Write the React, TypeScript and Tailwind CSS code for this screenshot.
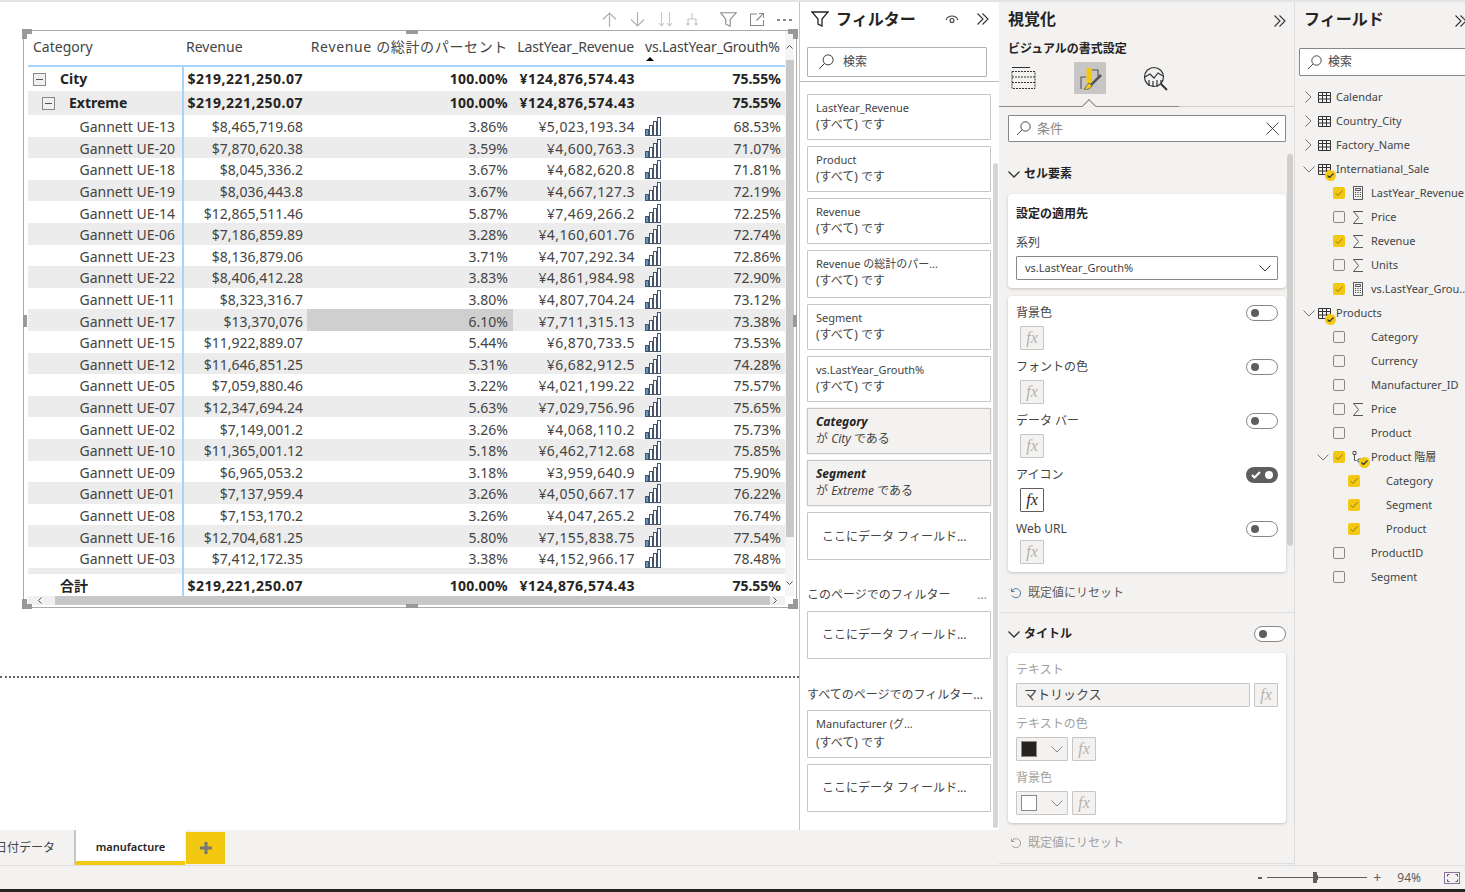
const rows = [
  ["13", "$8,465,719.68", "3.86%", "¥5,023,193.34", "68.53%"],
  ["20", "$7,870,620.38", "3.59%", "¥4,600,763.3", "71.07%"],
  ["18", "$8,045,336.2", "3.67%", "¥4,682,620.8", "71.81%"],
  ["19", "$8,036,443.8", "3.67%", "¥4,667,127.3", "72.19%"],
  ["14", "$12,865,511.46", "5.87%", "¥7,469,266.2", "72.25%"],
  ["06", "$7,186,859.89", "3.28%", "¥4,160,601.76", "72.74%"],
  ["23", "$8,136,879.06", "3.71%", "¥4,707,292.34", "72.86%"],
  ["22", "$8,406,412.28", "3.83%", "¥4,861,984.98", "72.90%"],
  ["11", "$8,323,316.7", "3.80%", "¥4,807,704.24", "73.12%"],
  ["17", "$13,370,076", "6.10%", "¥7,711,315.13", "73.38%"],
  ["15", "$11,922,889.07", "5.44%", "¥6,870,733.5", "73.53%"],
  ["12", "$11,646,851.25", "5.31%", "¥6,682,912.5", "74.28%"],
  ["05", "$7,059,880.46", "3.22%", "¥4,021,199.22", "75.57%"],
  ["07", "$12,347,694.24", "5.63%", "¥7,029,756.96", "75.65%"],
  ["02", "$7,149,001.2", "3.26%", "¥4,068,110.2", "75.73%"],
  ["10", "$11,365,001.12", "5.18%", "¥6,462,712.68", "75.85%"],
  ["09", "$6,965,053.2", "3.18%", "¥3,959,640.9", "75.90%"],
  ["01", "$7,137,959.4", "3.26%", "¥4,050,667.17", "76.22%"],
  ["08", "$7,153,170.2", "3.26%", "¥4,047,265.2", "76.74%"],
  ["16", "$12,704,681.25", "5.80%", "¥7,155,838.75", "77.54%"],
  ["03", "$7,412,172.35", "3.38%", "¥4,152,966.17", "78.48%"],
];

const filterCards = [
  { name: "LastYear_Revenue", h: "h-[46px]" },
  { name: "Product", h: "h-[46px]" },
  { name: "Revenue", h: "h-[46px]" },
  { name: "Revenue の総計のパー…", h: "h-[48px]" },
  { name: "Segment", h: "h-[46px]" },
  { name: "vs.LastYear_Grouth%", h: "h-[46px]" },
];

type Tree = { kind: "table" | "field" | "deep" | "hier"; label: string; open?: boolean; badge?: boolean; on?: boolean; icon?: "sum" | "calc" };

const tree: Tree[] = [
  { kind: "table", label: "Calendar" },
  { kind: "table", label: "Country_City" },
  { kind: "table", label: "Factory_Name" },
  { kind: "table", label: "Internatianal_Sale", open: true, badge: true },
  { kind: "field", label: "LastYear_Revenue", on: true, icon: "calc" },
  { kind: "field", label: "Price", icon: "sum" },
  { kind: "field", label: "Revenue", on: true, icon: "sum" },
  { kind: "field", label: "Units", icon: "sum" },
  { kind: "field", label: "vs.LastYear_Grou...", on: true, icon: "calc" },
  { kind: "table", label: "Products", open: true, badge: true },
  { kind: "field", label: "Category" },
  { kind: "field", label: "Currency" },
  { kind: "field", label: "Manufacturer_ID" },
  { kind: "field", label: "Price", icon: "sum" },
  { kind: "field", label: "Product" },
  { kind: "hier", label: "Product 階層", on: true },
  { kind: "deep", label: "Category", on: true },
  { kind: "deep", label: "Segment", on: true },
  { kind: "deep", label: "Product", on: true },
  { kind: "field", label: "ProductID" },
  { kind: "field", label: "Segment" },
];

const Chevrons = ({ className = "" }: { className?: string }) => (
  <svg width="14" height="14" viewBox="0 0 14 14" fill="none" stroke="#333" strokeWidth="1.1" className={className}>
    <path d="M1.5 1.5 7 7l-5.5 5.5M6.5 1.5 12 7l-5.5 5.5" />
  </svg>
);

const ChevDown = ({ color = "#333", sw = 1 }: { color?: string; sw?: number }) => (
  <svg width="12" height="7" viewBox="0 0 12 7" fill="none" stroke={color} strokeWidth={sw} className="shrink-0">
    <path d="M.5.5 6 6 11.5.5" />
  </svg>
);

const ChevRight = () => (
  <svg width="7" height="12" viewBox="0 0 7 12" fill="none" stroke="#777" strokeWidth="1" className="shrink-0">
    <path d="M.5.5 6 6 .5 11.5" />
  </svg>
);

const Glass = ({ size = 15 }: { size?: number }) => (
  <svg width={size} height={size} viewBox="0 0 15 15" fill="none" stroke="#333" strokeWidth="0.9" className="shrink-0">
    <circle cx="9.5" cy="5.5" r="4.7" />
    <path d="M6 9 1 14" />
  </svg>
);

const Bars = () => (
  <svg width="16" height="19" viewBox="0 0 16 19" fill="none" stroke="#44546a" strokeWidth="1" className="shrink-0">
    <rect x="0.5" y="12.5" width="3" height="6" fill="#5b9bd5" />
    <rect x="4.5" y="8.5" width="3" height="10" fill="#fff" />
    <rect x="8.5" y="4.5" width="3" height="14" fill="#fff" />
    <rect x="12.5" y="0.5" width="3" height="18" fill="#fff" />
  </svg>
);

const Minus = () => (
  <span className="flex h-[13px] w-[13px] shrink-0 items-center justify-center border border-[#888] bg-[#f0f0f0]">
    <span className="h-px w-[7px] bg-[#555]" />
  </span>
);

const Fx = ({ active = false }: { active?: boolean }) => (
  <span
    className={
      active
        ? "flex h-[24px] w-[24px] shrink-0 items-center justify-center rounded-[1px] border border-[#605e5c] bg-white font-['Liberation_Serif',serif] text-[16px] text-[#252423] italic"
        : "flex h-[24px] w-[24px] shrink-0 items-center justify-center rounded-[1px] border border-[#c8c6c4] bg-[#f3f2f1] font-['Liberation_Serif',serif] text-[16px] text-[#b3b0ad] italic"
    }
  >
    fx
  </span>
);

const Toggle = ({ on = false }: { on?: boolean }) =>
  on ? (
    <span className="flex h-[16px] w-[32px] shrink-0 items-center justify-between rounded-full bg-[#605e5c] px-[5px]">
      <svg width="10" height="8" viewBox="0 0 10 8" fill="none" stroke="#fff" strokeWidth="2">
        <path d="M1 4l2.5 2.5L9 1" />
      </svg>
      <span className="h-[8px] w-[8px] rounded-full bg-white" />
    </span>
  ) : (
    <span className="flex h-[16px] w-[32px] shrink-0 items-center rounded-full border border-[#8a8886] bg-white pl-[4px]">
      <span className="h-[8px] w-[8px] rounded-full bg-[#605e5c]" />
    </span>
  );

const Reset = ({ muted = false }: { muted?: boolean }) => (
  <div className={muted ? "flex h-[16px] items-center gap-[6px] pl-[11px] text-[12px] text-[#a19f9d]" : "flex h-[16px] items-center gap-[6px] pl-[11px] text-[12px] text-[#605e5c]"}>
    <svg width="12" height="12" viewBox="0 0 12 12" fill="none" stroke={muted ? "#a19f9d" : "#4a7fa5"} strokeWidth="1">
      <path d="M1.5 1.5v3h3M1.7 4.5A4.6 4.6 0 1 1 2 8.5" />
    </svg>
    既定値にリセット
  </div>
);

const Check = ({ on }: { on?: boolean }) =>
  on ? (
    <span className="flex h-[12px] w-[12px] shrink-0 items-center justify-center rounded-[2px] bg-[#f2c811]">
      <svg width="8" height="6" viewBox="0 0 8 6" fill="none" stroke="#7a6a20" strokeWidth="0.8">
        <path d="M.5 3 3 5.5 7.5.5" />
      </svg>
    </span>
  ) : (
    <span className="h-[12px] w-[12px] shrink-0 rounded-[2px] border border-[#8a8886]" />
  );

const Badge = ({ className }: { className: string }) => (
  <span className={`absolute flex h-[11px] w-[11px] items-center justify-center rounded-full bg-[#f2c811] ${className}`}>
    <svg width="7" height="5" viewBox="0 0 7 5" fill="none" stroke="#333" strokeWidth="1.2">
      <path d="M.5 2.5 2.5 4.5 6.5.5" />
    </svg>
  </span>
);

const TableIcon = () => (
  <svg width="13" height="11" viewBox="0 0 13 11" fill="none" stroke="#333" strokeWidth="1" className="shrink-0">
    <path d="M.5.5h12v10H.5zM.5 3.5h12M.5 7h12M4.5.5v10M8.5.5v10" />
  </svg>
);

const FieldIcon = ({ icon }: { icon?: "sum" | "calc" }) => {
  if (icon === "sum")
    return (
      <svg width="12" height="13" viewBox="0 0 12 13" fill="none" stroke="#444" strokeWidth="0.9" className="shrink-0">
        <path d="M11 .5H1.5L6.5 6.5l-5 6H11" />
      </svg>
    );
  if (icon === "calc")
    return (
      <svg width="12" height="14" viewBox="0 0 12 14" fill="none" stroke="#444" strokeWidth="0.9" className="shrink-0">
        <path d="M1.5.5h9v13h-9zM3.5 2.5h5v2h-5z" />
        <path d="M3 6.5h1.2M5.4 6.5h1.2M7.8 6.5H9M3 8.5h1.2M5.4 8.5h1.2M7.8 8.5H9M3 10.5h1.2M5.4 10.5h1.2M7.8 10.5H9" />
      </svg>
    );
  return <span className="w-[12px] shrink-0" />;
};

const TreeRow = ({ item }: { item: Tree }) => {
  if (item.kind === "table")
    return (
      <div className="flex h-[24px] items-center whitespace-nowrap pl-[7px] text-[11px] text-[#444]">
        <span className="flex w-[13px] shrink-0 justify-center">{item.open ? <ChevDown color="#777" /> : <ChevRight />}</span>
        <span className="relative ml-[3px] flex">
          <TableIcon />
          {item.badge && <Badge className="top-[6px] left-[7px]" />}
        </span>
        <span className="ml-[5px]">{item.label}</span>
      </div>
    );
  if (item.kind === "hier")
    return (
      <div className="flex h-[24px] items-center whitespace-nowrap pl-[22px] text-[11px] text-[#444]">
        <ChevDown color="#777" />
        <span className="ml-[4px]">
          <Check on />
        </span>
        <span className="relative ml-[7px] flex">
          <svg width="12" height="13" viewBox="0 0 12 13" fill="none" stroke="#444" strokeWidth="0.9" className="shrink-0">
            <path d="M1 .5h3v3H1zM2.5 3.5v6h2M6 8h3v3H6z" />
          </svg>
          <Badge className="top-[6px] left-[7px]" />
        </span>
        <span className="ml-[7px]">{item.label}</span>
      </div>
    );
  if (item.kind === "deep")
    return (
      <div className="flex h-[24px] items-center whitespace-nowrap pl-[53px] text-[11px] text-[#444]">
        <Check on={item.on} />
        <span className="ml-[26px]">{item.label}</span>
      </div>
    );
  return (
    <div className="flex h-[24px] items-center whitespace-nowrap pl-[38px] text-[11px] text-[#444]">
      <Check on={item.on} />
      <span className="ml-[7px] flex">
        <FieldIcon icon={item.icon} />
      </span>
      <span className="ml-[7px]">{item.label}</span>
    </div>
  );
};

const Toolbar = () => (
  <div className="flex h-[28px] items-center justify-end gap-[13px] pt-[7px] pr-[7px]">
    <svg width="15" height="15" viewBox="0 0 15 15" fill="none" stroke="#b3b0ad" strokeWidth="1.2">
      <path d="M7.5 15V1M1 7.5 7.5 1 14 7.5" />
    </svg>
    <svg width="15" height="15" viewBox="0 0 15 15" fill="none" stroke="#b3b0ad" strokeWidth="1.2">
      <path d="M7.5 0v14M1 7.5 7.5 14 14 7.5" />
    </svg>
    <svg width="15" height="15" viewBox="0 0 15 15" fill="none" stroke="#c8c6c4" strokeWidth="1.1">
      <path d="M3.5 0v14M1 11l2.5 3L6 11M11.5 0v14M9 11l2.5 3 2.5-3" />
    </svg>
    <svg width="12" height="13" viewBox="0 0 12 13" fill="none" stroke="#c8c6c4" strokeWidth="1.1" className="mr-[9px]">
      <path d="M6 0v6M2 12V6h8v6M.5 10.5 2 12l1.5-1.5M8.5 10.5 10 12l1.5-1.5" />
    </svg>
    <svg width="17" height="15" viewBox="0 0 17 15" fill="none" stroke="#8a8886" strokeWidth="1.1">
      <path d="M.8.8h15.4l-6 6.7v6.7l-4.4-2V7.5z" />
    </svg>
    <svg width="14" height="13" viewBox="0 0 14 13" fill="none" stroke="#8a8886" strokeWidth="1.1">
      <path d="M7 1H.5v11.5h13V7M9 .5h4.5V5M13.5.5 6.5 7.5" />
    </svg>
    <span className="flex w-[15px] justify-between">
      <span className="h-[2px] w-[3px] bg-[#888]" />
      <span className="h-[2px] w-[3px] bg-[#888]" />
      <span className="h-[2px] w-[3px] bg-[#888]" />
    </span>
  </div>
);

const Matrix = () => (
  <div className="relative ml-[23px] box-border h-[578px] w-[774px] border border-[#aaa] pl-[4px]">
    <span className="absolute -top-[2px] -left-[2px] h-[5px] w-[10px] bg-[#999]" />
    <span className="absolute -top-[2px] -left-[2px] h-[10px] w-[5px] bg-[#999]" />
    <span className="absolute -top-[2px] -right-[2px] h-[5px] w-[10px] bg-[#999]" />
    <span className="absolute -top-[2px] -right-[2px] h-[10px] w-[5px] bg-[#999]" />
    <span className="absolute -bottom-[2px] -left-[2px] h-[5px] w-[10px] bg-[#999]" />
    <span className="absolute -bottom-[2px] -left-[2px] h-[10px] w-[5px] bg-[#999]" />
    <span className="absolute -right-[2px] -bottom-[2px] h-[5px] w-[10px] bg-[#999]" />
    <span className="absolute -right-[2px] -bottom-[2px] h-[10px] w-[5px] bg-[#999]" />
    <span className="absolute -top-px left-[382px] h-[4px] w-[12px] bg-[#999]" />
    <span className="absolute -bottom-px left-[382px] h-[4px] w-[12px] bg-[#999]" />
    <span className="absolute top-[284px] -left-px h-[12px] w-[4px] bg-[#999]" />
    <span className="absolute top-[284px] -right-px h-[12px] w-[4px] bg-[#999]" />

    <div className="flex">
      <div className="w-[757px]">
        <div className="flex h-[36px] items-center border-b-2 border-[#a6d4fa] pb-[4px] text-[14px] whitespace-nowrap text-[#444]">
          <span className="w-[156px] pl-[5px]">Category</span>
          <span className="w-[123px] pl-[2px]">Revenue</span>
          <span className="w-[206px] pr-[5px] text-right tracking-[0.65px]">Revenue の総計のパーセント</span>
          <span className="w-[128px] pr-[7px] text-right tracking-[-0.1px]">LastYear_Revenue</span>
          <span className="relative w-[144px] pl-[4px] tracking-[-0.15px]">
            vs.LastYear_Grouth%
            <span className="absolute top-[21px] left-[5px] h-0 w-0 border-x-[4.5px] border-b-[4px] border-x-transparent border-b-black" />
          </span>
        </div>

        <div className="flex h-[24px] items-center text-[14px] font-bold whitespace-nowrap text-[#252423]">
          <span className="flex h-full w-[156px] items-center border-r-2 border-[#a6d4fa] pl-[5px]">
            <Minus />
            <span className="ml-[14px] pb-[2px]">City</span>
          </span>
          <span className="w-[123px] pr-[4px] pb-[2px] text-right tracking-[0.5px]">$219,221,250.07</span>
          <span className="w-[206px] pr-[5px] pb-[2px] text-right tracking-[0.25px]">100.00%</span>
          <span className="w-[128px] pr-[6px] pb-[2px] text-right tracking-[0.5px]">¥124,876,574.43</span>
          <span className="w-[144px] pr-[4px] pb-[2px] text-right">75.55%</span>
        </div>
        <div className="flex h-[24px] items-center bg-[#ececec] text-[14px] font-bold whitespace-nowrap text-[#252423]">
          <span className="flex h-full w-[156px] items-center border-r-2 border-[#a6d4fa] pl-[14px]">
            <Minus />
            <span className="ml-[14px] pb-[2px]">Extreme</span>
          </span>
          <span className="w-[123px] pr-[4px] pb-[2px] text-right tracking-[0.5px]">$219,221,250.07</span>
          <span className="w-[206px] pr-[5px] pb-[2px] text-right tracking-[0.25px]">100.00%</span>
          <span className="w-[128px] pr-[6px] pb-[2px] text-right tracking-[0.5px]">¥124,876,574.43</span>
          <span className="w-[144px] pr-[4px] pb-[2px] text-right">75.55%</span>
        </div>

        {rows.map((r, i) => (
          <div key={r[0]} className={i % 2 ? "flex h-[21.6px] items-center bg-[#ececec] text-[14px] whitespace-nowrap text-[#444]" : "flex h-[21.6px] items-center text-[14px] whitespace-nowrap text-[#444]"}>
            <span className="flex h-full w-[156px] items-center justify-end border-r-2 border-[#a6d4fa] pt-[2px] pr-[7px]">Gannett UE-{r[0]}</span>
            <span className="w-[123px] pt-[2px] pr-[4px] text-right">{r[1]}</span>
            <span className={r[0] === "17" ? "flex h-full w-[206px] items-center justify-end bg-[#cfcfcf] pt-[2px] pr-[5px]" : "w-[206px] pt-[2px] pr-[5px] text-right"}>{r[2]}</span>
            <span className="w-[128px] pt-[2px] pr-[6px] text-right tracking-[0.4px]">{r[3]}</span>
            <span className="flex w-[144px] items-center justify-between pt-[2px] pr-[4px] pl-[4px]">
              <Bars />
              {r[4]}
            </span>
          </div>
        ))}
        <div className="flex h-[5.4px] bg-[#ececec]">
          <span className="h-full w-[156px] border-r-2 border-[#a6d4fa]" />
        </div>

        <div className="flex h-[22px] items-center text-[14px] font-bold whitespace-nowrap text-[#252423]">
          <span className="flex h-full w-[156px] items-center border-r-2 border-[#a6d4fa] pt-[2px] pl-[32px]">合計</span>
          <span className="w-[123px] pt-[2px] pr-[4px] text-right tracking-[0.5px]">$219,221,250.07</span>
          <span className="w-[206px] pt-[2px] pr-[5px] text-right tracking-[0.25px]">100.00%</span>
          <span className="w-[128px] pt-[2px] pr-[6px] text-right tracking-[0.5px]">¥124,876,574.43</span>
          <span className="w-[144px] pt-[2px] pr-[4px] text-right">75.55%</span>
        </div>
      </div>

      <div className="flex h-[565px] w-[9px] flex-col items-center bg-[#f5f5f5]">
        <svg width="7" height="4" viewBox="0 0 7 4" fill="none" stroke="#555" strokeWidth="1" className="mt-[14px]">
          <path d="M.5 3.5 3.5.5l3 3" />
        </svg>
        <span className="mt-[11px] h-[477px] w-[8px] bg-[#c8c8c8]" />
        <svg width="7" height="4" viewBox="0 0 7 4" fill="none" stroke="#555" strokeWidth="1" className="mt-auto mb-[11px]">
          <path d="M.5.5l3 3 3-3" />
        </svg>
      </div>
    </div>

    <div className="flex h-[9px] w-[757px] items-center bg-[#f0f0f0]">
      <svg width="4" height="7" viewBox="0 0 4 7" fill="none" stroke="#555" strokeWidth="1" className="ml-[10px]">
        <path d="M3.5.5l-3 3 3 3" />
      </svg>
      <span className="ml-[13px] h-full w-[715px] bg-[#c8c8c8]" />
      <svg width="4" height="7" viewBox="0 0 4 7" fill="none" stroke="#555" strokeWidth="1" className="ml-[3px]">
        <path d="M.5.5l3 3-3 3" />
      </svg>
    </div>
  </div>
);

const FilterPane = () => (
  <div className="relative h-full w-[200px] shrink-0 border-l border-[#c8c6c4] bg-white">
    <div className="flex h-[33px] items-center pl-[11px]">
      <svg width="18" height="16" viewBox="0 0 18 16" fill="none" stroke="#252423" strokeWidth="1.3">
        <path d="M1 1h16l-6 7v7l-4-2V8z" />
      </svg>
      <span className="ml-[7px] text-[16px] font-bold text-[#252423]">フィルター</span>
      <svg width="14" height="10" viewBox="0 0 14 10" fill="none" stroke="#444" strokeWidth="1.1" className="ml-auto">
        <path d="M1 6a6.5 6.5 0 0 1 12 0" />
        <circle cx="7" cy="6.5" r="2" />
      </svg>
      <Chevrons className="mr-[9px] ml-[17px]" />
    </div>
    <div className="mx-[7px] mt-[12px] flex h-[30px] w-[180px] items-center rounded-[1px] border border-[#b3b0ad] pl-[10px] text-[12px] text-[#444]">
      <Glass size={16} />
      <span className="ml-[9px]">検索</span>
    </div>
    <div className="mt-[4px] h-px bg-[#bbb]" />
    <div className="mt-[12px] flex w-[184px] translate-x-[7px] flex-col gap-[6px] text-[12px] leading-[17px] text-[#444]">
      {filterCards.map((c) => (
        <div key={c.name} className={`box-border rounded-[1px] border border-[#c8c6c4] pt-[4px] pl-[8px] whitespace-nowrap ${c.h}`}>
          <div className="text-[11px]">{c.name}</div>
          <div>(すべて) です</div>
        </div>
      ))}
      <div className="box-border h-[46px] rounded-[1px] border border-[#c8c6c4] bg-[#f3f2f1] pt-[4px] pl-[8px] shadow-[0_0_1px_#999]">
        <div className="font-bold text-[#252423] italic">Category</div>
        <div>
          が <i>City</i> である
        </div>
      </div>
      <div className="box-border h-[46px] rounded-[1px] border border-[#c8c6c4] bg-[#f3f2f1] pt-[4px] pl-[8px] shadow-[0_0_1px_#999]">
        <div className="font-bold text-[#252423] italic">Segment</div>
        <div>
          が <i>Extreme</i> である
        </div>
      </div>
      <div className="box-border flex h-[48px] items-center rounded-[1px] border border-[#c8c6c4] pl-[14px]">ここにデータ フィールド...</div>
    </div>
    <div className="mt-[26px] flex h-[17px] w-[184px] translate-x-[7px] items-center justify-between pr-[4px] text-[12px] text-[#444]">
      <span>このページでのフィルター</span>
      <span className="text-[#888]">...</span>
    </div>
    <div className="mt-[8px] box-border flex h-[48px] w-[184px] translate-x-[7px] items-center rounded-[1px] border border-[#c8c6c4] pl-[14px] text-[12px] text-[#444]">ここにデータ フィールド...</div>
    <div className="mt-[27px] h-[17px] translate-x-[7px] text-[12px] whitespace-nowrap text-[#444]">すべてのページでのフィルター...</div>
    <div className="mt-[7px] box-border h-[48px] w-[184px] translate-x-[7px] rounded-[1px] border border-[#c8c6c4] pt-[3px] pl-[8px] text-[12px] leading-[19px] text-[#444]">
      <div className="text-[11px]">Manufacturer (グ...</div>
      <div>(すべて) です</div>
    </div>
    <div className="mt-[6px] box-border flex h-[48px] w-[184px] translate-x-[7px] items-center rounded-[1px] border border-[#c8c6c4] pl-[14px] text-[12px] text-[#444]">ここにデータ フィールド...</div>
    <span className="absolute top-[161px] right-[1px] bottom-[2px] w-[5px] rounded-full bg-[#d6d6d6]" />
  </div>
);

const FormatRow = ({ label, on = false, tight = false }: { label: string; on?: boolean; tight?: boolean }) => (
  <div className="h-[54px] pr-[8px] pl-[8px] text-[12px] text-[#444]">
    <div className="flex h-[16px] items-center justify-between">
      <span>{label}</span>
      <Toggle on={on} />
    </div>
    <div className={tight ? "mt-[3px] pl-[4px]" : "mt-[5px] pl-[4px]"}>
      <Fx active={on} />
    </div>
  </div>
);

const ColorPick = ({ dark = false }: { dark?: boolean }) => (
  <div className="mt-[5px] flex gap-[4px]">
    <span className="flex h-[24px] w-[52px] items-center justify-between rounded-[1px] border border-[#c8c6c4] bg-[#f3f2f1] pr-[4px] pl-[4px]">
      <span className={dark ? "h-[16px] w-[16px] border border-[#8a8886] bg-[#252423]" : "h-[16px] w-[16px] border border-[#8a8886] bg-white"} />
      <ChevDown color="#8a8886" />
    </span>
    <Fx />
  </div>
);

const VizPane = () => (
  <div className="relative h-full w-[296px] shrink-0 border-r border-[#ddd] bg-[#f3f2f1]">
    <div className="mt-[6px] flex h-[22px] items-center justify-between pr-[7px] pl-[9px]">
      <span className="text-[16px] font-bold text-[#252423]">視覚化</span>
      <Chevrons className="mt-[4px]" />
    </div>
    <div className="mt-[11px] h-[16px] pl-[9px] text-[12px] leading-[16px] font-semibold text-[#252423]">ビジュアルの書式設定</div>
    <div className="mt-[5px] flex h-[32px] items-center pl-[12px]">
      <svg width="25" height="24" viewBox="0 0 25 24" fill="none" stroke="#333" strokeWidth="1" className="shrink-0">
        <path d="M1 1.5h18" />
        <path d="M1 5.5h23v17H1zM1 11h23M1 16.5h23" strokeDasharray="2 1" />
      </svg>
      <span className="ml-[38px] flex h-[32px] w-[32px] items-center justify-center rounded-[1px] bg-[#c8c6c4]">
        <svg width="32" height="32" viewBox="0 0 32 32" fill="none">
          <path d="M7 27V15h5M18 8h6v6" stroke="#555" strokeWidth="1.1" />
          <rect x="12.5" y="6" width="5.5" height="15" fill="#f2c811" />
          <path d="M27 13 17 23" stroke="#555" strokeWidth="2.5" />
          <path d="M18 24c-2 3-5 4-8 3 2-1 2-4 5-6z" fill="#f2c811" stroke="#555" strokeWidth="0.8" />
        </svg>
      </span>
      <svg width="26" height="25" viewBox="0 0 26 25" fill="none" stroke="#333" strokeWidth="1.2" className="ml-[37px]">
        <circle cx="11" cy="11" r="9.5" />
        <path d="M2 11l5-3 4 4 4-5 5 3" />
        <path d="M6 14v6M10 15v6M14 14v7M18 14v4" />
        <path d="M18 18l6 6" strokeWidth="2" />
      </svg>
    </div>
    <div className="relative mt-[12px] h-px bg-[#d2d0ce]">
      <span className="absolute top-0 left-0 h-px w-[180px] bg-[#8a8886]" />
      <span className="absolute -top-[5px] left-[85px] h-[10px] w-[10px] rotate-45 border-t border-l border-[#8a8886] bg-[#f3f2f1]" />
    </div>
    <div className="mt-[8px] ml-[9px] flex h-[27px] w-[278px] items-center rounded-[1px] border border-[#8a8886] bg-white pr-[6px] pl-[7px] text-[13px] text-[#8a8886]">
      <Glass />
      <span className="ml-[6px]">条件</span>
      <svg width="13" height="13" viewBox="0 0 13 13" fill="none" stroke="#333" strokeWidth="0.9" className="ml-auto">
        <path d="M.5.5l12 12M12.5.5l-12 12" />
      </svg>
    </div>

    <div className="mt-[24px] flex h-[16px] items-center gap-[4px] pl-[9px] text-[12px] font-semibold text-[#252423]">
      <ChevDown sw={1.3} />
      セル要素
    </div>
    <div className="mt-[12px] ml-[9px] box-border h-[94px] w-[278px] rounded-[4px] bg-white px-[8px] pt-[12px] text-[12px] text-[#444] shadow-[0_1px_3px_rgba(0,0,0,0.2)]">
      <div className="h-[16px] leading-[16px] font-semibold text-[#252423]">設定の適用先</div>
      <div className="mt-[13px] h-[16px] leading-[16px]">系列</div>
      <div className="mt-[5px] flex h-[24px] items-center justify-between rounded-[1px] border border-[#8a8886] pr-[6px] pl-[8px] text-[11px]">
        vs.LastYear_Grouth%
        <ChevDown />
      </div>
    </div>
    <div className="mt-[8px] ml-[9px] box-border h-[276px] w-[278px] rounded-[4px] bg-white pt-[9px] shadow-[0_1px_3px_rgba(0,0,0,0.2)]">
      <FormatRow label="背景色" />
      <FormatRow label="フォントの色" />
      <FormatRow label="データ バー" />
      <FormatRow label="アイコン" on />
      <FormatRow label="Web URL" tight />
    </div>
    <div className="mt-[13px]">
      <Reset />
    </div>
    <div className="mt-[11px] h-px bg-[#ddd]" />
    <div className="mt-[13px] flex h-[16px] items-center gap-[4px] pr-[8px] pl-[9px] text-[12px] font-semibold text-[#252423]">
      <ChevDown sw={1.3} />
      タイトル
      <span className="ml-auto">
        <Toggle />
      </span>
    </div>
    <div className="mt-[11px] ml-[9px] box-border h-[170px] w-[278px] rounded-[4px] bg-white px-[8px] pt-[9px] text-[12px] text-[#a19f9d] shadow-[0_1px_3px_rgba(0,0,0,0.2)]">
      <div className="h-[16px] leading-[16px]">テキスト</div>
      <div className="mt-[5px] flex gap-[4px]">
        <span className="flex h-[24px] flex-1 items-center rounded-[1px] border border-[#c8c6c4] bg-[#f3f2f1] pl-[7px] text-[13px] text-[#444]">マトリックス</span>
        <Fx />
      </div>
      <div className="mt-[9px] h-[16px] leading-[16px]">テキストの色</div>
      <ColorPick dark />
      <div className="mt-[9px] h-[16px] leading-[16px]">背景色</div>
      <ColorPick />
    </div>
    <div className="mt-[12px]">
      <Reset muted />
    </div>
    <div className="mt-[12px] h-px bg-[#ddd]" />
    <span className="absolute top-[152px] right-px h-[392px] w-[6px] rounded-full bg-[#d2d0ce]" />
  </div>
);

const FieldsPane = () => (
  <div className="h-full w-[170px] shrink-0 overflow-hidden bg-[#f3f2f1]">
    <div className="mt-[6px] flex h-[22px] items-center pl-[9px]">
      <span className="shrink-0 text-[16px] font-bold whitespace-nowrap text-[#252423]">フィールド</span>
      <Chevrons className="mt-[4px] ml-[70px] shrink-0" />
    </div>
    <div className="mt-[18px] ml-[4px] flex h-[28px] w-[180px] items-center rounded-[1px] border border-[#8a8886] bg-white pl-[7px] text-[12px] text-[#444]">
      <Glass />
      <span className="ml-[6px]">検索</span>
    </div>
    <div className="mt-[9px]">
      {tree.map((t, i) => (
        <TreeRow key={i} item={t} />
      ))}
    </div>
  </div>
);

const App = () => {
  return (
    <div className="flex h-[892px] w-[1465px] flex-col overflow-hidden bg-[#f3f2f1] font-['Noto_Sans','Noto_Sans_CJK_JP',sans-serif]">
      <div className="h-[2px] shrink-0 bg-[#e4e4e4]" />
      <div className="flex h-[864px] shrink-0 border-b border-[#ddd]">
        <div className="flex w-[999px] shrink-0 flex-col">
          <div className="flex h-[828px] shrink-0">
            <div className="w-[799px] shrink-0 bg-white">
              <Toolbar />
              <Matrix />
              <div className="mt-[68px] border-t-2 border-dotted border-[#666]" />
            </div>
            <FilterPane />
          </div>
          <div className="flex h-[35px] items-start">
            <span className="flex h-[35px] w-[76px] items-center justify-end border-r-2 border-[#c8c6c4] pr-[19px] text-[12px] whitespace-nowrap text-[#444]">日付データ</span>
            <span className="box-border flex h-[35px] w-[109px] items-center justify-center border-b-4 border-[#f2c811] bg-white pt-[4px] text-[11px] font-semibold text-[#252423]">manufacture</span>
            <span className="mt-[2px] ml-px flex h-[32px] w-[39px] items-center justify-center bg-[#f2c811]">
              <svg width="12" height="12" viewBox="0 0 12 12" fill="#777">
                <path d="M4.5 0h3v4.5H12v3H7.5V12h-3V7.5H0v-3h4.5z" />
              </svg>
            </span>
          </div>
        </div>
        <VizPane />
        <FieldsPane />
      </div>
      <div className="flex h-[23px] shrink-0 items-center justify-end pr-[5px] text-[12px] text-[#605e5c]">
        <span className="mr-[5px] h-[2px] w-[4px] bg-[#605e5c]" />
        <span className="relative h-px w-[100px] bg-[#605e5c]">
          <span className="absolute -top-[5px] left-[46px] h-[11px] w-[4px] bg-[#605e5c]" />
          <span className="absolute -top-[2px] left-[50px] h-[5px] w-px bg-[#605e5c]" />
        </span>
        <span className="ml-[6px] text-[14px] leading-none">+</span>
        <span className="ml-[16px]">94%</span>
        <span className="ml-[23px] flex h-[12px] w-[16px] items-center justify-center border border-[#8a6f9a]">
          <svg width="13" height="10" viewBox="0 0 13 10" fill="none" stroke="#555" strokeWidth="1">
            <path d="M1.5 3.5v-2h2M9.5 1.5h2v2M1.5 6.5v2h2M9.5 8.5h2v-2" />
          </svg>
        </span>
      </div>
      <div className="h-[3px] shrink-0 bg-[#252423]" />
    </div>
  );
};

export default App;
